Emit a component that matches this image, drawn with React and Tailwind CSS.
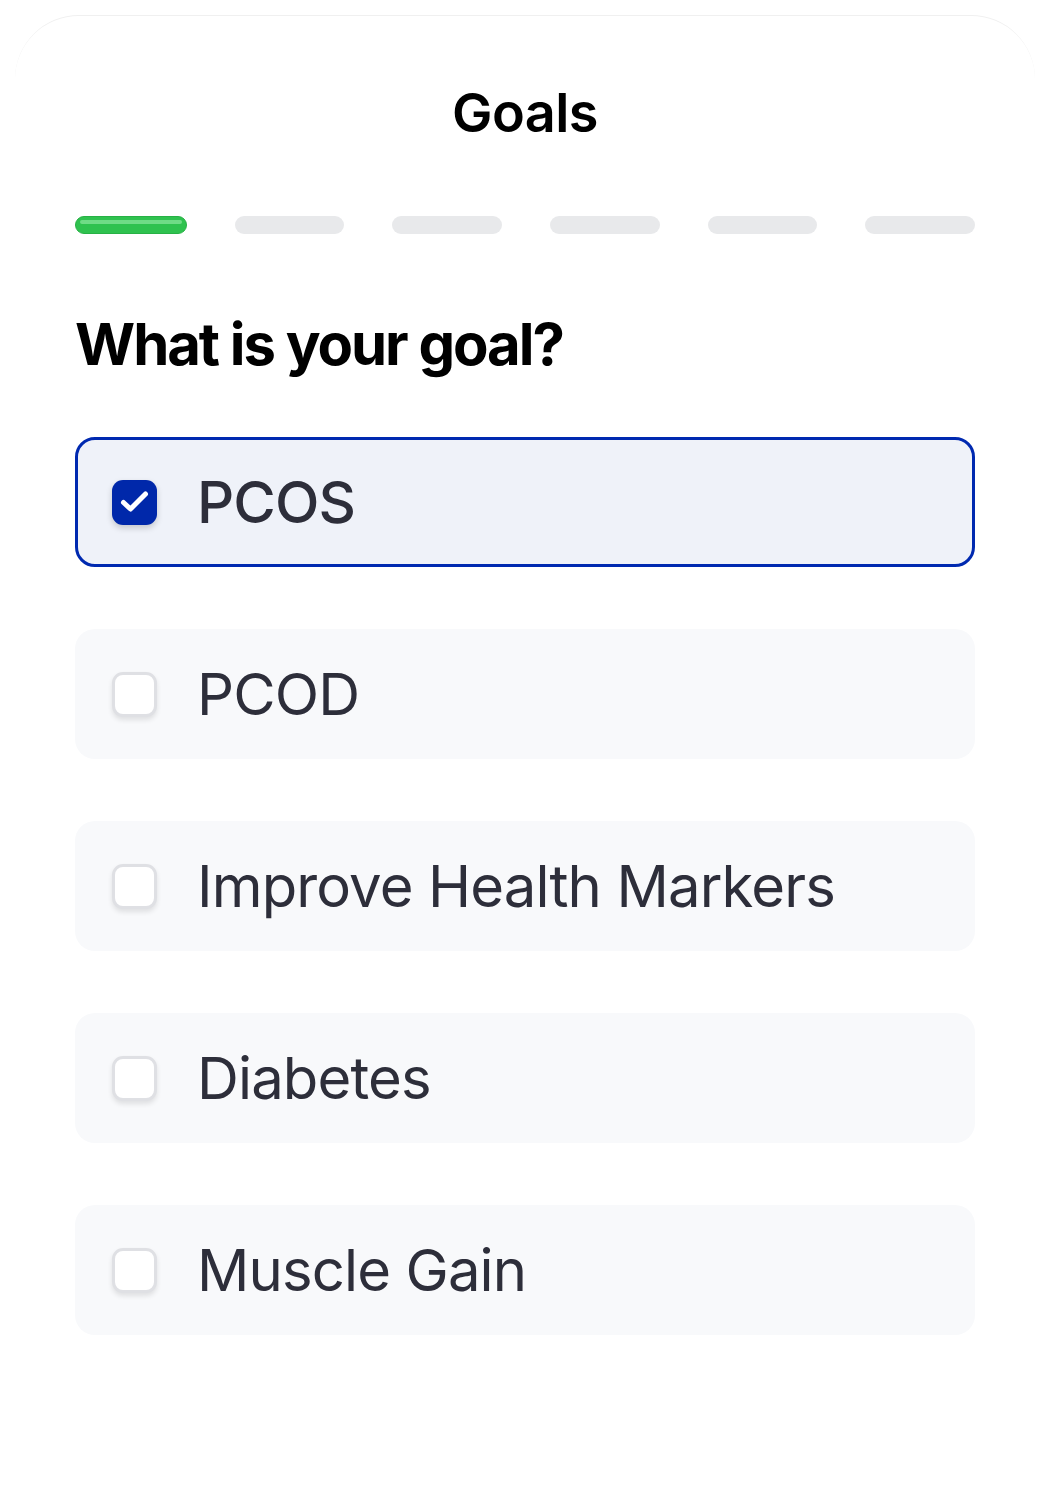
import React from "react";

const options = [
  { label: "PCOS", checked: true },
  { label: "PCOD", checked: false },
  { label: "Improve Health Markers", checked: false },
  { label: "Diabetes", checked: false },
  { label: "Muscle Gain", checked: false },
];

function Check({ checked }) {
  if (checked) {
    return (
      <div className="w-[45px] h-[45px] shrink-0 rounded-[11px] bg-[#0028aa] shadow-[0_3px_6px_rgba(0,0,0,0.18)]">
        <svg width="45" height="45" viewBox="0 0 45 45" fill="none">
          <path d="M11.5 22.5l7 6.5L33.5 14" stroke="white" strokeWidth="5" strokeLinecap="round" strokeLinejoin="round" />
        </svg>
      </div>
    );
  }
  return (
    <div className="w-[45px] h-[45px] shrink-0 rounded-[11px] bg-white border-[3px] border-[#dfe0e4] shadow-[0_3px_5px_rgba(0,0,0,0.1)]" />
  );
}

export default function App() {
  return (
    <div className="min-h-[1509px] bg-white" style={{ fontFamily: "Inter, 'Noto Sans', sans-serif" }}>
      <div className="mx-[15px] pt-[15px]">
        <div className="rounded-t-[64px] border-t border-[#f0f0f0] bg-white min-h-[1494px] px-[60px] pt-[65px]">
          <h1 className="text-center text-[54px] leading-[64px] font-semibold text-black tracking-[-0.01em]">Goals</h1>
          <div className="mt-[71px] flex gap-[48px]">
            {[0, 1, 2, 3, 4, 5].map((i) =>
              i === 0 ? (
                <div key={i} className="flex-1 h-[18px] rounded-full bg-[#2fc24f] border border-[#27b145] relative overflow-hidden">
                  <div className="absolute left-[4px] right-[4px] top-[3px] h-[4px] rounded-full bg-[#6fdc86]" />
                </div>
              ) : (
                <div key={i} className="flex-1 h-[18px] rounded-full bg-[#e8e9eb]" />
              )
            )}
          </div>
          <h2 className="mt-[75px] text-[58px] leading-[70px] font-bold text-black tracking-[-0.035em]">What is your goal?</h2>
          <div className="mt-[58px] flex flex-col gap-[62px]">
            {options.map((o) => (
              <div
                key={o.label}
                className={
                  "h-[130px] rounded-[20px] border-[3px] flex items-center pl-[34px] gap-[40px] " +
                  (o.checked ? "bg-[#eff2f9] border-[#0029b0]" : "bg-[#f8f9fb] border-transparent")
                }
              >
                <Check checked={o.checked} />
                <span className={"text-[58px] leading-[70px] text-[#2d2e3a] tracking-[-0.015em] " + (o.checked ? "font-medium" : "font-normal")}>
                  {o.label}
                </span>
              </div>
            ))}
          </div>
        </div>
      </div>
    </div>
  );
}
